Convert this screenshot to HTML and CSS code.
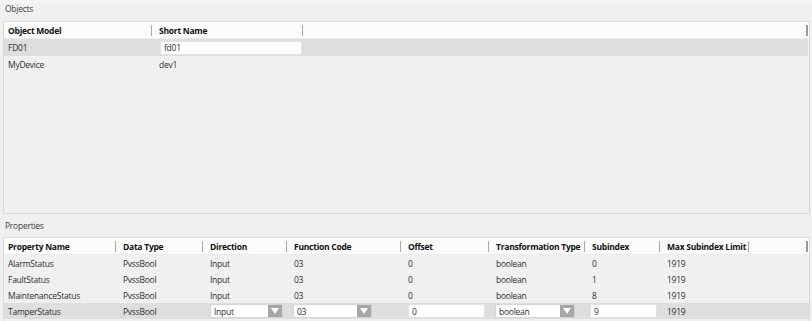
FILE: index.html
```html
<!DOCTYPE html>
<html>
    <head>
        <title>Object Models</title>
        <link rel="stylesheet" href="styles.css">
    </head>
    <body>
        <div class="label label_top">Objects</div>
        <div class="grid objects">
            <div class="row head">
                <div class="cell">Object Model</div>
                <div class="cell">Short Name</div>
                <div class="cell"></div>
            </div>
            <div class="row selected tall">
                <div class="cell">FD01</div>
                <div class="cell"><span class="textbox name_box">fd01</span></div>
                <div class="cell"></div>
            </div>
            <div class="row">
                <div class="cell">MyDevice</div>
                <div class="cell">dev1</div>
                <div class="cell"></div>
            </div>
        </div>

        <div class="label">Properties</div>
        <div class="grid properties">
            <div class="row head">
                <div class="cell">Property Name</div>
                <div class="cell">Data Type</div>
                <div class="cell">Direction</div>
                <div class="cell">Function Code</div>
                <div class="cell">Offset</div>
                <div class="cell">Transformation Type</div>
                <div class="cell">Subindex</div>
                <div class="cell">Max Subindex Limit</div>
                <div class="cell"></div>
            </div>
            <div class="row">
                <div class="cell">AlarmStatus</div>
                <div class="cell">PvssBool</div>
                <div class="cell">Input</div>
                <div class="cell">03</div>
                <div class="cell">0</div>
                <div class="cell">boolean</div>
                <div class="cell">0</div>
                <div class="cell">1919</div>
                <div class="cell"></div>
            </div>
            <div class="row">
                <div class="cell">FaultStatus</div>
                <div class="cell">PvssBool</div>
                <div class="cell">Input</div>
                <div class="cell">03</div>
                <div class="cell">0</div>
                <div class="cell">boolean</div>
                <div class="cell">1</div>
                <div class="cell">1919</div>
                <div class="cell"></div>
            </div>
            <div class="row">
                <div class="cell">MaintenanceStatus</div>
                <div class="cell">PvssBool</div>
                <div class="cell">Input</div>
                <div class="cell">03</div>
                <div class="cell">0</div>
                <div class="cell">boolean</div>
                <div class="cell">8</div>
                <div class="cell">1919</div>
                <div class="cell"></div>
            </div>
            <div class="row selected">
                <div class="cell">TamperStatus</div>
                <div class="cell">PvssBool</div>
                <div class="cell">
                    <span class="combo dir_box"><span class="combo_text">Input</span><span class="combo_btn"><svg width="8" height="6" viewBox="0 0 8 6"><polygon points="0,0 8,0 4,6" fill="#fff"/></svg></span></span>
                </div>
                <div class="cell">
                    <span class="combo fc_box"><span class="combo_text">03</span><span class="combo_btn"><svg width="8" height="6" viewBox="0 0 8 6"><polygon points="0,0 8,0 4,6" fill="#fff"/></svg></span></span>
                </div>
                <div class="cell"><span class="textbox offset_box">0</span></div>
                <div class="cell">
                    <span class="combo tt_box"><span class="combo_text">boolean</span><span class="combo_btn"><svg width="8" height="6" viewBox="0 0 8 6"><polygon points="0,0 8,0 4,6" fill="#fff"/></svg></span></span>
                </div>
                <div class="cell"><span class="textbox sub_box">9</span></div>
                <div class="cell">1919</div>
                <div class="cell"></div>
            </div>
        </div>
    </body>
</html>
```

FILE: styles.css
```css
body {
    margin: 0;
    padding: 0;
    background: #f0f0f0;
    border-top: 3px solid #f5f5f5;
    font-family: 'Open Sans', 'Noto Sans', sans-serif;
    font-size: 8.5px;
    letter-spacing: -0.25px;
    color: #2e2e2e;
    overflow: hidden;
}

.label {
    height: 23px;
    box-sizing: border-box;
    padding: 6px 0 0 5px;
    line-height: 11px;
    color: #404040;
}

.label_top {
    height: 18px;
    padding-top: 0;
}

.grid {
    margin: 0 2px 0 3px;
    border: 1px solid #d9d9d9;
    background: #f0f0f0;
}

.objects {
    height: 191px;
}

.properties {
    height: 83px;
    border-bottom: 0;
}

.row {
    display: grid;
    height: 16px;
}

.row.tall {
    height: 17px;
}

.objects .row {
    grid-template-columns: 148px 151px 1fr;
}

.properties .row {
    grid-template-columns: 112px 87px 84px 114px 88px 96px 75px 89px 1fr;
}

.cell {
    display: flex;
    align-items: center;
    padding-left: 7px;
    white-space: nowrap;
    overflow: hidden;
}

.cell:first-child {
    padding-left: 4px;
}

.head {
    height: 17px;
    box-sizing: border-box;
    background: #fbfbfb;
    border-bottom: 1px solid #ececec;
}

.head .cell {
    font-weight: 700;
    color: #111111;
    background: linear-gradient(#a8a8a8, #a8a8a8) right center / 1px 11px no-repeat;
}

.head .cell:last-child {
    background-position: right 1px center;
    background-size: 2px 11px;
    background-image: linear-gradient(#9a9a9a, #9a9a9a);
}

.selected {
    background: #dedede;
}

.objects .selected {
    margin-right: 1px;
}

.textbox {
    display: flex;
    align-items: center;
    height: 14px;
    box-sizing: border-box;
    padding-left: 3px;
    background: #ffffff;
    border: 1px solid #e2e2e2;
}

.name_box {
    width: 142px;
    margin-left: 1px;
}

.offset_box {
    width: 77px;
}

.sub_box {
    width: 67px;
    margin-left: -2px;
}

.combo {
    display: flex;
    height: 14px;
    box-sizing: border-box;
    background: #ffffff;
    border: 1px solid #d6d6d6;
}

.combo_text {
    flex: 1;
    display: flex;
    align-items: center;
    padding-left: 3px;
}

.combo_btn {
    width: 14px;
    display: flex;
    align-items: center;
    justify-content: center;
    background: #a6a6a6;
}

.dir_box {
    width: 73px;
}

.fc_box {
    width: 79px;
    margin-left: -1px;
}

.tt_box {
    width: 80px;
    margin-left: -1px;
}
```
